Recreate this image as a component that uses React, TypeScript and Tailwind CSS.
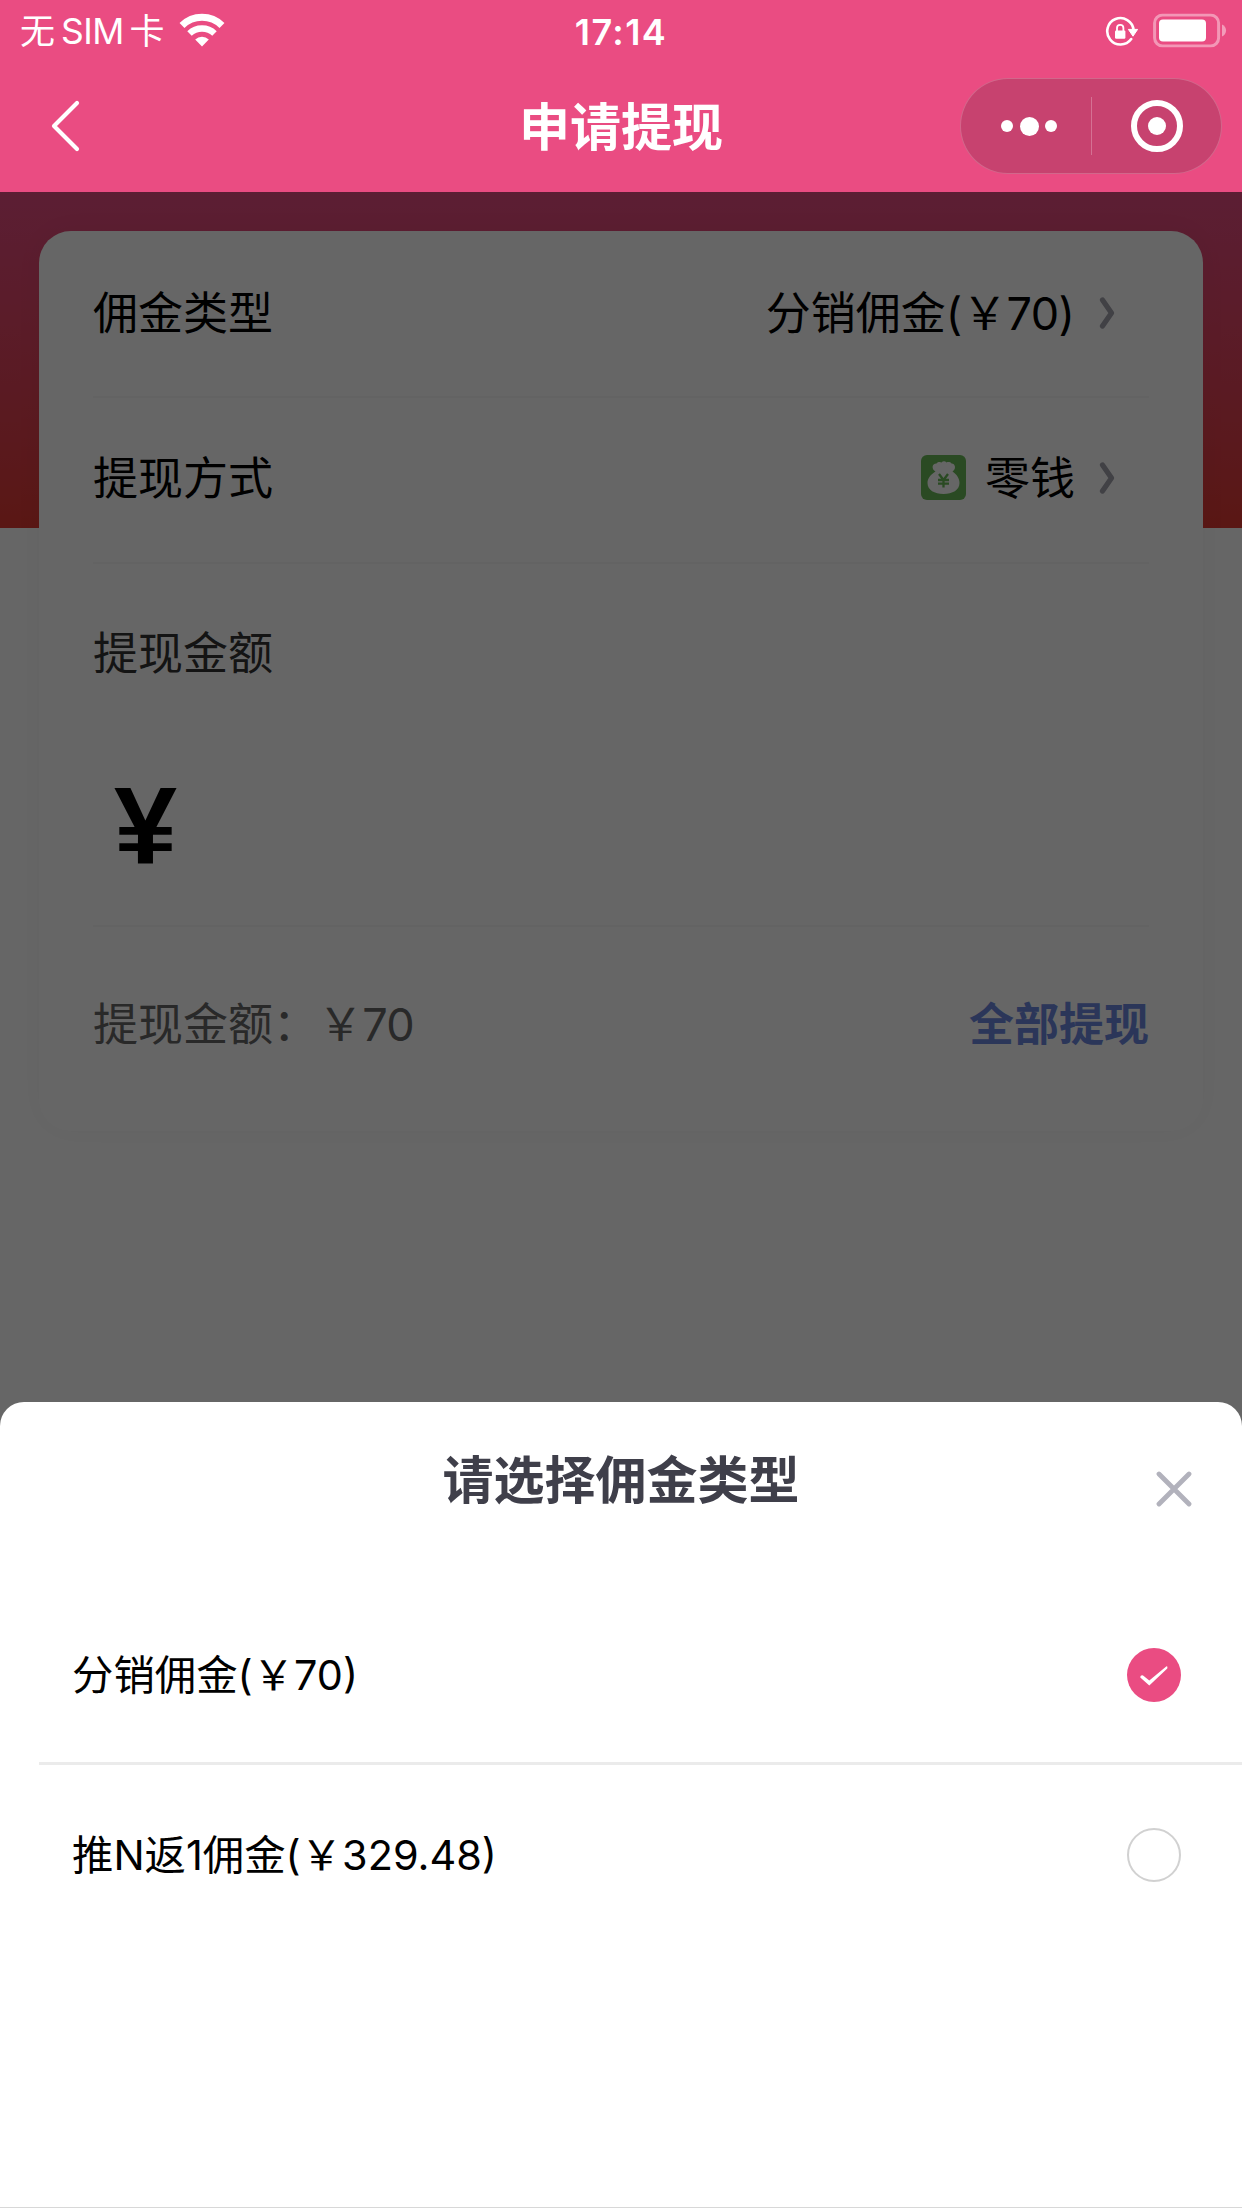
import React from "react";

function StatusBar() {
  return (
    <div className="grid h-[63px] grid-cols-3 items-center text-[35px] leading-none">
      <div className="flex items-center pl-[20px]">
        <span>无</span>
        <span className="ml-[6px] mr-[6px] text-[35.5px] tracking-[-0.6px]">SIM</span>
        <span>卡</span>
        <svg className="ml-[14px] -translate-y-[2px]" width="46" height="34" viewBox="0 0 46 34" fill="none">
          <path d="M3 12.500 A28.500 28.500 0 0 1 43 12.500" stroke="#fff" strokeWidth="7" />
          <path d="M10.500 20.500 A18 18 0 0 1 35.500 20.500" stroke="#fff" strokeWidth="6.400" />
          <path d="M16.200 26.400 A10 10 0 0 1 29.800 26.400 L23 33.400 Z" fill="#fff" />
        </svg>
      </div>
      <div className="text-center text-[36px] font-semibold tracking-[1.4px]">17:14</div>
      <div className="flex items-center justify-end pr-[15px]">
        <svg className="mr-[14px]" width="34" height="32" viewBox="0 0 34 32" fill="none">
          <path d="M28.600 14 A13.200 13.200 0 1 0 26.200 23" stroke="#fff" strokeWidth="2.600" strokeLinecap="round" />
          <path d="M23.400 13.400 H32.600 L28 20.200 Z" fill="#fff" stroke="#fff" strokeLinejoin="round" />
          <rect x="10" y="14.400" width="10.400" height="8.400" rx="1.200" fill="#fff" />
          <path d="M12 15 V12 A3.200 3.200 0 0 1 18.400 12 V15" stroke="#fff" strokeWidth="1.800" />
        </svg>
        <svg className="-translate-y-[1.5px]" width="74" height="34" viewBox="0 0 74 34" fill="none">
          <rect x="1.600" y="1.500" width="64" height="31" rx="8" stroke="#fff" strokeOpacity="0.42" strokeWidth="3" />
          <rect x="6" y="6" width="47" height="22" rx="4" fill="#fff" />
          <path d="M69 11 C74.400 13.400 74.400 20.600 69 23 Z" fill="#fff" fillOpacity="0.45" />
        </svg>
      </div>
    </div>
  );
}

function NavBar() {
  return (
    <div className="grid h-[126px] grid-cols-[282px_1fr_282px] items-center">
      <svg className="ml-[48px]" width="34" height="56" viewBox="0 0 34 56" fill="none">
        <path d="M29 5 L6 28 L29 51" stroke="#fff" strokeWidth="4.200" strokeLinecap="round" strokeLinejoin="round" />
      </svg>
      <h1 className="pt-[2px] text-center text-[51px] font-bold leading-none">申请提现</h1>
      <div className="flex h-[96px] w-[262px] items-center rounded-full border border-white/20 bg-[#c7426f]">
        <div className="flex w-[130px] items-center justify-center gap-[6.5px] pl-[6px]">
          <i className="size-[12px] rounded-full bg-white" />
          <i className="size-[19px] rounded-full bg-white" />
          <i className="size-[12px] rounded-full bg-white" />
        </div>
        <div className="h-[58px] w-px bg-white/25" />
        <div className="flex flex-1 items-center justify-center">
          <div className="flex size-[52px] items-center justify-center rounded-full border-[6px] border-white">
            <i className="size-[18px] rounded-full bg-white" />
          </div>
        </div>
      </div>
    </div>
  );
}

function Arrow() {
  return (
    <svg className="ml-[24px] mr-[32px] -translate-y-px" width="18" height="34" viewBox="0 0 18 34" fill="none">
      <path d="M3.500 4 L12.500 17 L3.500 30" stroke="#a2a2ac" strokeWidth="5.200" strokeLinecap="round" strokeLinejoin="round" />
    </svg>
  );
}

function MoneyBag() {
  return (
    <svg className="mr-[19px] -translate-y-px" width="45" height="45" viewBox="0 0 45 45" fill="none">
      <rect width="45" height="45" rx="6" fill="#69b957" />
      <path
        d="M14.500 16.500 C10.500 14.500 10.500 8.500 15.500 8.500 C17 6.500 19.500 6.800 20.500 7.500 C21.800 5.800 24.200 5.800 25.500 7.500 C27 6.800 29.500 7 30.500 8.500 C35 8.800 35 14.500 31.500 16.500 C36 19.500 38.500 23.500 38.500 28 C38.500 35 31.500 39 22.500 39 C13.500 39 6.500 35 6.500 28 C6.500 23.500 9.500 19.500 14.500 16.500 Z"
        fill="#fff"
      />
      <path d="M18 19 L22.500 25 L27 19 M22.500 25 V32.500 M17 25 H28 M17 28.600 H28" stroke="#69b957" strokeWidth="2.300" />
    </svg>
  );
}

function WithdrawCard() {
  return (
    <section className="mx-[39px] h-[900px] rounded-[32px] bg-white pl-[54px] pr-[54px] text-[45px] leading-none text-black shadow-[0_0_30px_rgba(0,0,0,0.035)]">
      <div className="flex h-[167px] items-center justify-between border-b-2 border-[#f8f8f8]">
        <span>佣金类型</span>
        <div className="flex items-center">
          <span>
            分销佣金(<span className="tracking-[-0.6px]">￥70</span>)
          </span>
          <Arrow />
        </div>
      </div>
      <div className="flex h-[166px] items-center justify-between border-b-2 border-[#f8f8f8] pb-[3px]">
        <span>提现方式</span>
        <div className="flex items-center">
          <MoneyBag />
          <span>零钱</span>
          <Arrow />
        </div>
      </div>
      <div className="h-[363px] border-b-2 border-[#f8f8f8] pt-[67px]">
        <div className="text-[#333]">提现金额</div>
        <div className="ml-[21px] mt-[96px] w-fit origin-left scale-x-[1.04] font-['Liberation_Sans',sans-serif] text-[109px] font-bold leading-[108px]">
          ¥
        </div>
      </div>
      <div className="flex h-[194px] items-center justify-between text-[#666]">
        <span>
          提现金额：<span className="tracking-[-0.8px]">￥70</span>
        </span>
        <span className="font-bold text-[#6b87de]">全部提现</span>
      </div>
    </section>
  );
}

const options = [
  { label: "分销佣金(￥70)", checked: true },
  { label: "推N返1佣金(￥329.48)", checked: false },
];

function TypeSheet() {
  return (
    <section className="relative h-[806px] rounded-t-[24px] border-b border-[#d8d8d8] bg-white">
      <header className="grid h-[183px] grid-cols-[120px_1fr_120px] items-start">
        <span />
        <h2 className="pt-[52px] text-center text-[51px] font-bold leading-[54px] text-[#3f3f4a]">请选择佣金类型</h2>
        <svg className="ml-[34px] mt-[69px]" width="36" height="36" viewBox="0 0 36 36" fill="none">
          <path d="M3 3 L33 33 M33 3 L3 33" stroke="#b2b2bc" strokeWidth="4.800" strokeLinecap="round" />
        </svg>
      </header>
      <ul className="ml-[39px]">
        {options.map((o) => (
          <li
            key={o.label}
            className="flex h-[180px] items-center justify-between border-[#ebebeb] pl-[33px] pr-[61px] text-[41.4px] leading-none text-black not-last:border-b-[3px] not-last:pt-[3px]"
          >
            <span className="pt-[2px]">{o.label}</span>
            {o.checked ? (
              <svg width="54" height="54" viewBox="0 0 54 54">
                <circle cx="27" cy="27" r="27" fill="#ea4c82" />
                <path
                  d="M13.300 29.500 C13.300 27 15.500 26.600 17 28.200 L22.300 32.500 L39.500 18.300 Q41 18.200 40.300 20.500 L22.300 37.500 Z"
                  fill="#fff"
                />
              </svg>
            ) : (
              <i className="size-[54px] rounded-full border-2 border-[#d1d1d1]" />
            )}
          </li>
        ))}
      </ul>
    </section>
  );
}

export default function App() {
  return (
    <div className="flex h-[2208px] w-[1242px] flex-col overflow-hidden bg-white font-[Inter,'Noto_Sans_CJK_SC',sans-serif]">
      <div className="h-[192px] shrink-0 bg-[#ea4c82] text-white">
        <StatusBar />
        <NavBar />
      </div>
      <main className="relative flex flex-1 flex-col">
        <div className="h-[336px] bg-linear-to-b from-[#e54c82] to-[#e03a32] pt-[39px]">
          <WithdrawCard />
        </div>
        <div className="absolute inset-0 bg-black/60" />
        <div className="mt-auto">
          <TypeSheet />
        </div>
      </main>
    </div>
  );
}
